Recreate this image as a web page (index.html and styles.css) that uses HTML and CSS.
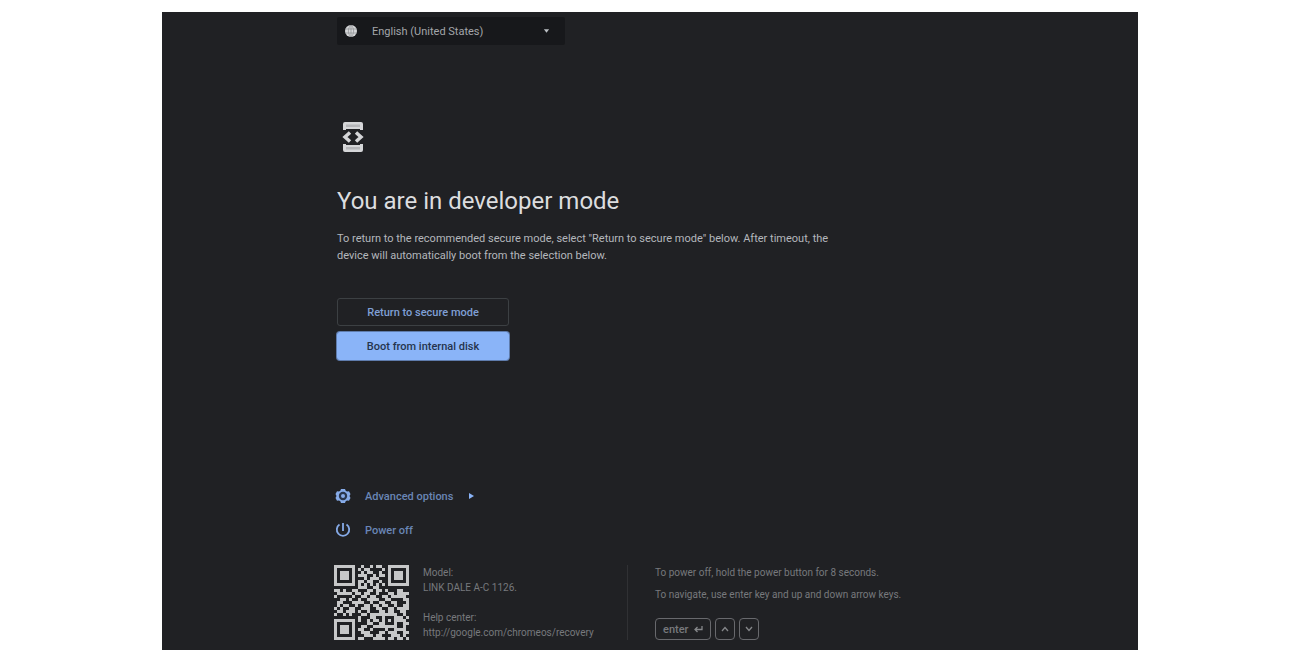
FILE: index.html
```html
<!DOCTYPE html>
<html lang="en">
<head>
    <meta charset="UTF-8">
    <meta name="viewport" content="width=device-width, initial-scale=1.0">
    <title>Developer mode</title>
    <link rel="stylesheet" href="styles.css">
</head>
<body>
    <div class="screen">
        <!-- Language picker -->
        <div class="language">
            <svg class="globe" viewBox="0 0 14 14" aria-hidden="true">
                <circle cx="7" cy="7" r="6" fill="#d6d7d9"/>
                <path d="M1 5h12M1 9h12M7 1v12M7 1C3.5 4 3.5 10 7 13M7 1c3.500 3 3.500 9 0 12" fill="none" stroke="#8b8d90" stroke-width=".7"/>
            </svg>
            <select id="language" aria-label="Language">
                <option>English (United States)</option>
            </select>
            <svg class="caret" viewBox="0 0 8 4" aria-hidden="true"><path d="M1 0h6L4 4z" fill="#bdc1c6"/></svg>
        </div>

        <main>
            <svg class="dev-icon" viewBox="0 0 22 32" aria-hidden="true">
                <path d="M1 9V3q0-2 2-2h16q2 0 2 2v6h-3V8H4v1zM1 23v6q0 2 2 2h16q2 0 2-2v-6h-3v1H4v-1z" fill="#d5d6d8"/>
                <path d="M4 3.500h14v2.500H4zM4 26h14v2.500H4z" fill="#b4b5b8"/>
                <path d="M8 11.500L3 16l5 4.500M14 11.500l5 4.500-5 4.500" fill="none" stroke="#d5d6d8" stroke-width="3.500"/>
            </svg>
            <h1>You are in developer mode</h1>
            <p class="intro">To return to the recommended secure mode, select "Return to secure mode" below. After timeout, the device will automatically boot from the selection below.</p>
            <div class="actions">
                <button type="button">Return to secure mode</button>
                <button type="button" class="selected">Boot from internal disk</button>
            </div>
        </main>

        <nav class="links">
            <a href="#advanced">
                <svg class="link-icon" viewBox="0 0 16 16" aria-hidden="true">
                    <path d="M6 1h4l.7 1.800 1.300.7 2-.2L15.500 6l-1 2 1 2-1.500 2.700-2-.2-1.300.7L10 15H6l-.7-1.800-1.300-.7-2 .2L.5 10l1-2-1-2L2 3.300l2 .2 1.300-.7z" fill="#86abe8"/>
                    <circle cx="8" cy="8" r="4.200" fill="#29364c"/>
                    <circle cx="8" cy="8" r="2" fill="#86abe8"/>
                </svg>
                <span>Advanced options</span>
                <svg class="arrow" viewBox="0 0 5 6" aria-hidden="true"><path d="M0 0l5 3-5 3z" fill="#8ab4f8"/></svg>
            </a>
            <a href="#power">
                <svg class="link-icon" viewBox="0 0 16 16" aria-hidden="true">
                    <path d="M8 1v8M4.500 2.500a6.200 6.200 0 1 0 7 0" fill="none" stroke="#86abe8" stroke-width="1.800"/>
                </svg>
                <span>Power off</span>
            </a>
        </nav>

        <footer>
            <svg class="qr" id="qr" viewBox="0 0 25 25" role="img" aria-label="QR code"></svg>
            <div class="device">
                <p>Model:<br>LINK DALE A-C 1126.</p>
                <p>Help center:<br>http://google.com/chromeos/recovery</p>
            </div>
            <div class="hints">
                <p>To power off, hold the power button for 8 seconds.</p>
                <p>To navigate, use enter key and up and down arrow keys.</p>
                <div class="keys">
                    <kbd>enter
                        <svg viewBox="0 0 10 8" aria-hidden="true"><path d="M9 1v3.500H2M4.500 2L2 4.500 4.500 7" fill="none" stroke="#85878a" stroke-width="1.300"/></svg>
                    </kbd>
                    <kbd><svg viewBox="0 0 10 8" aria-label="up"><path d="M2 6l3-3.500L8 6" fill="none" stroke="#85878a" stroke-width="1.300"/></svg></kbd>
                    <kbd><svg viewBox="0 0 10 8" aria-label="down"><path d="M2 2l3 3.500L8 2" fill="none" stroke="#85878a" stroke-width="1.300"/></svg></kbd>
                </div>
            </div>
        </footer>
    </div>

    <script>
        // One string per row of modules
        const rows = [
            '1111111001001011001111111',
            '1000001010110000101000001',
            '1011101001011001001011101',
            '1011101011100101101011101',
            '1011101000101110001011101',
            '1000001011011001001000001',
            '1111111010101010101111111',
            '0000000011100110000000000',
            '1101001100011011010001100',
            '0111110110110010001101111',
            '1000001001101100110111110',
            '0011010010011110011000011',
            '0110001111001001100110001',
            '0101100100110110110010011',
            '1010011001110011001101111',
            '0110111010010001101100110',
            '1001010001101111111110010',
            '0000000010001100100011101',
            '1111111010010110101011110',
            '1000001000011001100010011',
            '1011101001100111111110010',
            '1011101011001000010011110',
            '1011101001110001101110011',
            '1000001000111011000111010',
            '1111111011000111101101101'
        ];
        let path = '';
        rows.forEach((row, y) => {
            for (const run of row.matchAll(/1+/g)) {
                path += `M${run.index} ${y}h${run[0].length}v1h-${run[0].length}z`;
            }
        });
        document.getElementById('qr').innerHTML = `<path d="${path}" fill="#c6c7c8"/>`;
    </script>
</body>
</html>
```

FILE: styles.css
```css
* {
    box-sizing: border-box;
}
body {
    margin: 0;
    background: #fff;
    font-family: Roboto, sans-serif;
    font-size: 11px;
    color: #b4b7bc;
}
h1, p {
    margin: 0;
}
.screen {
    display: flex;
    flex-direction: column;
    min-height: calc(100vh - 12px);
    margin: 12px 162px 0;
    padding: 5px 175px 10px;
    background: #202124;
}
.language {
    display: flex;
    align-items: center;
    width: 228px;
    height: 28px;
    padding: 0 15px 0 7px;
    border-radius: 2px;
    background: #17181b;
}
.globe {
    width: 14px;
    height: 14px;
    margin-right: 14px;
}
.language select {
    flex: 1;
    padding: 0;
    border: 0;
    appearance: none;
    background: transparent;
    color: #a3a6aa;
    font: 11px Roboto, sans-serif;
}
.caret {
    width: 7px;
    height: 4px;
}
.dev-icon {
    display: block;
    width: 22px;
    height: 32px;
    margin: 76px 0 0 5px;
}
h1 {
    margin-top: 32px;
    font-size: 24px;
    font-weight: 400;
    line-height: 32px;
    color: #dcdddf;
}
.intro {
    max-width: 520px;
    margin-top: 13px;
    line-height: 17px;
}
.actions {
    display: flex;
    flex-direction: column;
    gap: 6px;
    width: 172px;
    margin-top: 34px;
}
.actions button {
    height: 28px;
    padding: 0;
    border: 1px solid #3c4043;
    border-radius: 3px;
    background: transparent;
    color: #7f9fd4;
    font: 500 11px Roboto, sans-serif;
}
.actions .selected {
    border-color: #8ab4f8;
    background: #8ab4f8;
    color: #26344d;
    box-shadow: 0 0 0 1px #5f7cac;
}
.links {
    display: flex;
    flex-direction: column;
    gap: 18px;
    margin-top: auto;
}
.links a {
    display: flex;
    align-items: center;
    height: 16px;
    color: #6a86b6;
    font-weight: 500;
    text-decoration: none;
}
.link-icon {
    width: 16px;
    height: 16px;
    margin: 0 14px 0 -2px;
}
.arrow {
    width: 5px;
    height: 6px;
    margin-left: 16px;
}
footer {
    display: flex;
    margin: 27px 0 0 -3px;
    color: #77797d;
    font-size: 10px;
    line-height: 15px;
}
.qr {
    flex: none;
    width: 75px;
    height: 75px;
    shape-rendering: crispEdges;
}
.device {
    display: flex;
    flex-direction: column;
    justify-content: space-between;
    width: 219px;
    padding-left: 14px;
    border-right: 1px solid #303134;
}
.hints {
    padding-left: 27px;
}
.hints p {
    margin-bottom: 7px;
}
.keys {
    display: flex;
    gap: 4px;
    margin-top: 16px;
}
kbd {
    display: flex;
    align-items: center;
    gap: 5px;
    height: 22px;
    padding: 0 4px;
    border: 1px solid #68696d;
    border-radius: 4px;
    font: 500 11px Roboto, sans-serif;
}
kbd:first-child {
    padding: 0 7px;
}
kbd svg {
    width: 10px;
    height: 8px;
}
```
